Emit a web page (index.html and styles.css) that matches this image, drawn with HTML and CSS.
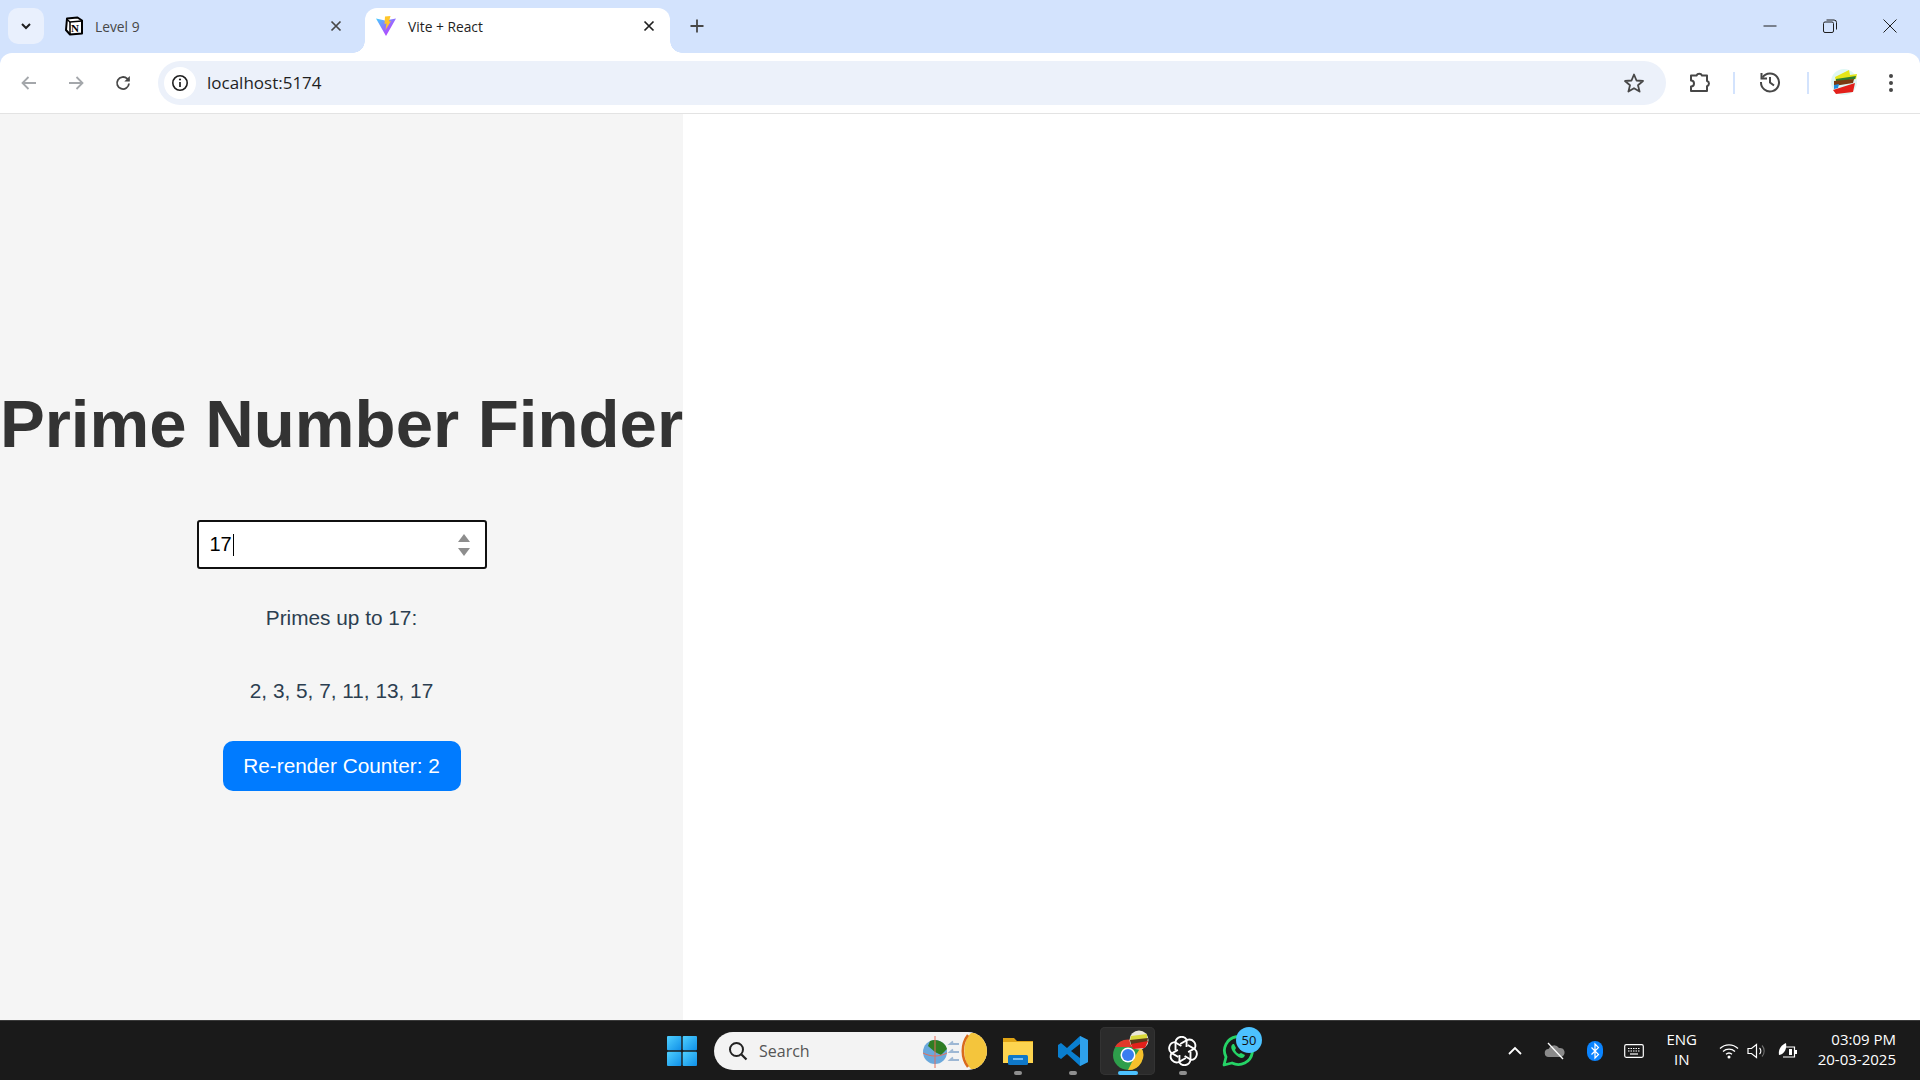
FILE: index.html
```html
<!DOCTYPE html>
<html lang="en">
<head>
    <meta charset="UTF-8">
    <title>Vite + React</title>
    <link rel="stylesheet" href="styles.css">
</head>
<body>
    <header class="tabstrip">
        <div class="tab-search">
            <svg width="14" height="14" viewBox="0 0 14 14"><path d="M3 5l4 4 4-4" fill="none" stroke="#1f1f1f" stroke-width="2"/></svg>
        </div>
        <div class="tab">
            <svg class="favicon" width="20" height="20" viewBox="0 0 20 20">
                <path d="M3 2.500L13.500 1.500 18 4.500V17.500L6 18.500 2 14z" fill="#fff" stroke="#000" stroke-width="2" stroke-linejoin="round"/>
                <path d="M2.500 3l3.500 3 12-1" fill="none" stroke="#000" stroke-width="1.500"/>
                <path d="M6 6v12" stroke="#000" stroke-width="1.500"/>
                <text x="7" y="16" class="notion-n">N</text>
            </svg>
            <span class="tab-title">Level 9</span>
            <svg class="tab-close" width="12" height="12" viewBox="0 0 12 12"><path d="M1.500 1.500l9 9M10.500 1.500l-9 9" stroke="#474747" stroke-width="1.700"/></svg>
        </div>
        <div class="tab tab-active">
            <svg class="favicon" width="22" height="22" viewBox="0 0 22 22">
                <path d="M1 3.500L10 5.500 21 3.500 11 21z" fill="url(#viteBody)"/>
                <path d="M10 1.500L15.500 1 14 6.500 16 6 10.500 15 11.500 8.500 9.500 9z" fill="#ffc62a"/>
                <defs>
                    <linearGradient id="viteBody" x1="0" y1="0" x2="1" y2="1">
                        <stop offset="0" stop-color="#41d1ff"/>
                        <stop offset="0.6" stop-color="#a35cff"/>
                        <stop offset="1" stop-color="#bd34fe"/>
                    </linearGradient>
                </defs>
            </svg>
            <span class="tab-title">Vite + React</span>
            <svg class="tab-close" width="12" height="12" viewBox="0 0 12 12"><path d="M1.500 1.500l9 9M10.500 1.500l-9 9" stroke="#1f1f1f" stroke-width="1.700"/></svg>
        </div>
        <svg class="new-tab" width="16" height="16" viewBox="0 0 16 16"><path d="M8 1.500v13M1.500 8h13" stroke="#474747" stroke-width="1.800"/></svg>
        <div class="window-controls">
            <svg width="14" height="14" viewBox="0 0 14 14"><path d="M0.500 7h13" stroke="#1f1f1f" stroke-width="1"/></svg>
            <svg width="14" height="14" viewBox="0 0 14 14"><rect x="0.500" y="3" width="10" height="10.500" rx="1.500" fill="none" stroke="#1f1f1f"/><path d="M3.500 1h7.500a2.500 2.500 0 0 1 2.500 2.500v7" fill="none" stroke="#1f1f1f"/></svg>
            <svg width="14" height="14" viewBox="0 0 14 14"><path d="M0.500 0.500l13 13M13.500 0.500l-13 13" stroke="#1f1f1f" stroke-width="1"/></svg>
        </div>
    </header>

    <nav class="toolbar">
        <svg class="nav-icon" width="20" height="20" viewBox="0 0 20 20"><path d="M17 10H4M9.500 4L3.500 10l6 6" fill="none" stroke="#a4a7ab" stroke-width="1.800"/></svg>
        <svg class="nav-icon" width="20" height="20" viewBox="0 0 20 20"><path d="M3 10h13M10.500 4l6 6-6 6" fill="none" stroke="#a4a7ab" stroke-width="1.800"/></svg>
        <svg class="nav-icon" width="20" height="20" viewBox="0 0 20 20"><path d="M16 10.500a6 6 0 1 1-1.800-4.800L16 7.500" fill="none" stroke="#474747" stroke-width="1.800"/><path d="M16.800 3v5.500h-5.500z" fill="#474747"/></svg>
        <div class="omnibox">
            <div class="site-info">
                <svg width="18" height="18" viewBox="0 0 18 18"><circle cx="9" cy="9" r="7.200" fill="none" stroke="#1f1f1f" stroke-width="1.600"/><path d="M9 8v5" stroke="#1f1f1f" stroke-width="1.700"/><circle cx="9" cy="5.500" r="1.100" fill="#1f1f1f"/></svg>
            </div>
            <span class="url">localhost:5174</span>
            <svg class="star" width="22" height="22" viewBox="0 0 22 22"><path d="M11 2.500l2.500 6 6.500.5-5 4.300 1.600 6.300L11 16.200l-5.600 3.400L7 13.300 2 9l6.500-.5z" fill="none" stroke="#474747" stroke-width="1.800" stroke-linejoin="round"/></svg>
        </div>
        <svg class="tool-extensions" width="24" height="24" viewBox="0 0 24 24"><path d="M3 5.500h5.500a3 3 0 0 1 5.500 0h5v5.500a2.700 2.700 0 0 1 0 5.200v4.800H3v-4.500a3 3 0 0 0 0-6z" fill="none" stroke="#474747" stroke-width="2" stroke-linejoin="round"/></svg>
        <span class="tool-divider"></span>
        <svg class="tool-history" width="24" height="24" viewBox="0 0 24 24"><path d="M4.500 7.500A9 9 0 1 1 3 12" fill="none" stroke="#474747" stroke-width="2"/><path d="M3.500 3v5.500H9" fill="none" stroke="#474747" stroke-width="2"/><path d="M12 7v5.500l4 3" fill="none" stroke="#474747" stroke-width="2"/></svg>
        <span class="tool-divider tool-divider-wide"></span>
        <svg class="avatar" width="28" height="28" viewBox="0 0 28 28">
            <circle cx="14" cy="14" r="13" fill="#dff7f5"/>
            <path d="M5 9l14-7 1 5 7-1-1 5-20 3z" fill="#e6e619"/>
            <path d="M6 11l20-3-1 3-19 3z" fill="#2e7d32"/>
            <path d="M4 13l20-2-1 4-19 3z" fill="#7a3b12"/>
            <path d="M4 17l5-1-1 4-4 1z" fill="#1f8fe0"/>
            <path d="M3 22l22-7-2 9-17 2z" fill="#e3201b"/>
        </svg>
        <svg class="tool-menu" width="6" height="20" viewBox="0 0 6 20"><circle cx="3" cy="3" r="2" fill="#474747"/><circle cx="3" cy="10" r="2" fill="#474747"/><circle cx="3" cy="17" r="2" fill="#474747"/></svg>
    </nav>

    <main class="page">
        <section class="finder">
            <h1>Prime Number Finder</h1>
            <div class="number-field">
                <span class="number-value">17</span>
                <span class="caret"></span>
                <svg class="spinner" width="14" height="24" viewBox="0 0 14 24"><path d="M7 1l6 8H1zM7 23l6-8H1z" fill="#8d8d8d"/></svg>
            </div>
            <p class="primes-label">Primes up to 17:</p>
            <p class="primes-list">2, 3, 5, 7, 11, 13, 17</p>
            <button class="counter" type="button">Re-render Counter: 2</button>
        </section>
    </main>

    <footer class="taskbar">
        <div class="task-center">
            <svg class="start" width="30" height="30" viewBox="0 0 30 30">
                <defs><linearGradient id="win" x1="0" y1="0" x2="1" y2="1"><stop offset="0" stop-color="#4fd0ff"/><stop offset="1" stop-color="#0f8fe8"/></linearGradient></defs>
                <rect width="14.300" height="14.300" rx="1" fill="url(#win)"/><rect x="15.700" width="14.300" height="14.300" rx="1" fill="url(#win)"/>
                <rect y="15.700" width="14.300" height="14.300" rx="1" fill="url(#win)"/><rect x="15.700" y="15.700" width="14.300" height="14.300" rx="1" fill="url(#win)"/>
            </svg>
            <div class="search-pill">
                <svg width="20" height="20" viewBox="0 0 20 20"><circle cx="8.500" cy="8.500" r="6.500" fill="none" stroke="#222" stroke-width="2"/><path d="M13.500 13.500l5 5" stroke="#222" stroke-width="2.200"/></svg>
                <span class="search-text">Search</span>
                <svg class="search-art" width="66" height="38" viewBox="0 0 66 38">
                    <circle cx="14" cy="20" r="12" fill="#6aa8dc"/>
                    <path d="M9 9c7-3 15 1 17 8l-6 6-6-3-7-6z" fill="#2f7d22"/>
                    <path d="M2 21c8 4 16 4 24 0" fill="none" stroke="#e46f5c" stroke-width="1"/>
                    <path d="M14 4v32" stroke="#e46f5c" stroke-width="1"/>
                    <path d="M38 12h-9l3-2.500M38 20h-9l3-2.500M38 28h-9l3-2.500" fill="none" stroke="#9db7d4" stroke-width="1.800"/>
                    <path d="M66 1H50c-9 8-9 28 0 36h16z" fill="#f4c53c"/>
                    <path d="M47 3c-7 9-7 23 0 32" fill="none" stroke="#d96a1c" stroke-width="2.500"/>
                </svg>
            </div>
            <div class="task-app">
                <svg width="32" height="32" viewBox="0 0 32 32"><path d="M1 3h11l3 3h16v22H1z" fill="#e0a415"/><rect x="1" y="7" width="30" height="21" fill="#fdd44f"/><rect x="6" y="20" width="20" height="10" rx="1.500" fill="#0f78c8"/><path d="M11 24h10" stroke="#9dd6ff" stroke-width="1.500"/></svg>
                <span class="run-dot"></span>
            </div>
            <div class="task-app">
                <svg width="32" height="32" viewBox="0 0 32 32"><path d="M23 1l8 4v22l-8 4-13-12-6 5-3-2V10l3-2 6 5z" fill="#0a7fd0"/><path d="M23 1l8 4v22l-8 4z" fill="#2ea0ea"/><path d="M23 9v14l-9-7z" fill="#1a1a1a"/></svg>
                <span class="run-dot"></span>
            </div>
            <div class="task-app task-app-active">
                <svg width="44" height="44" viewBox="0 0 44 44">
                    <circle cx="22" cy="26" r="15" fill="#2e9e4b"/>
                    <path d="M9 18a15 15 0 0 1 26 0H22z" fill="#e0392b"/>
                    <path d="M35 18a15 15 0 0 1-13 23l6.500-13z" fill="#f6c02b"/>
                    <circle cx="22" cy="26" r="7.500" fill="#fff"/><circle cx="22" cy="26" r="6" fill="#3a7df0"/>
                    <circle cx="33" cy="11" r="9.500" fill="#e9e6d8"/>
                    <path d="M25 7l16-2v5l-17 2z" fill="#d8d83a"/>
                    <path d="M24 11l18-2-1 5-16 2z" fill="#5a3a1a"/>
                    <path d="M25 15l17-3-3 7-12 1z" fill="#e3201b"/>
                </svg>
                <span class="run-bar"></span>
            </div>
            <div class="task-app">
                <svg width="30" height="30" viewBox="0 0 32 32" fill="none" stroke="#fff" stroke-width="2">
                    <path d="M13 8.500l7.500-4.300a6.500 6.500 0 0 1 8 9l-7 4"/>
                    <path d="M13 8.500l7.500-4.300a6.500 6.500 0 0 1 8 9l-7 4" transform="rotate(60 16 16)"/>
                    <path d="M13 8.500l7.500-4.300a6.500 6.500 0 0 1 8 9l-7 4" transform="rotate(120 16 16)"/>
                    <path d="M13 8.500l7.500-4.300a6.500 6.500 0 0 1 8 9l-7 4" transform="rotate(180 16 16)"/>
                    <path d="M13 8.500l7.500-4.300a6.500 6.500 0 0 1 8 9l-7 4" transform="rotate(240 16 16)"/>
                    <path d="M13 8.500l7.500-4.300a6.500 6.500 0 0 1 8 9l-7 4" transform="rotate(300 16 16)"/>
                </svg>
                <span class="run-dot"></span>
            </div>
            <div class="task-app">
                <svg width="32" height="32" viewBox="0 0 32 32"><path d="M2 30l2-8A14 14 0 1 1 10 28z" fill="none" stroke="#25d366" stroke-width="2.800" stroke-linejoin="round"/><path d="M11 9c-3 2-2 6 2 10s7 5 9 3l1-2-4-2-2 1c-2-1-3-2-4-4l1-2-2-4z" fill="#25d366"/></svg>
                <span class="badge">50</span>
            </div>
        </div>
        <div class="tray">
            <svg class="tray-chevron" width="16" height="16" viewBox="0 0 16 16"><path d="M2 11l6-6 6 6" fill="none" stroke="#fff" stroke-width="1.800"/></svg>
            <svg class="tray-cloud" width="22" height="18" viewBox="0 0 22 18"><path d="M5 15a4 4 0 0 1-.5-8A6 6 0 0 1 15 6a4.500 4.500 0 0 1 2 9z" fill="#8a8a8a"/><path d="M4 1l15 16" stroke="#fff" stroke-width="1.300"/></svg>
            <svg class="tray-bt" width="16" height="20" viewBox="0 0 16 20"><rect width="16" height="20" rx="8" fill="#0a84ff"/><path d="M4.500 6.500l7 7L8 17V3l3.500 3.500-7 7" fill="none" stroke="#fff" stroke-width="1.200"/></svg>
            <svg class="tray-keys" width="20" height="16" viewBox="0 0 20 16"><rect x="0.700" y="1.700" width="18.600" height="12.600" rx="1.500" fill="none" stroke="#fff" stroke-width="1.200"/><path d="M4 5.500h12M4 8h12" stroke="#fff" stroke-width="1.200" stroke-dasharray="1.500 1"/><path d="M6 11h8" stroke="#fff" stroke-width="1.200"/></svg>
            <div class="tray-lang"><span>ENG</span><span>IN</span></div>
            <svg class="tray-wifi" width="20" height="16" viewBox="0 0 20 16"><path d="M1 5.500a13 13 0 0 1 18 0M4 8.500a9 9 0 0 1 12 0M7 11.300a4.500 4.500 0 0 1 6 0" fill="none" stroke="#fff" stroke-width="1.300"/><circle cx="10" cy="14" r="1.500" fill="#fff"/></svg>
            <svg class="tray-sound" width="20" height="18" viewBox="0 0 20 18"><path d="M1 6.500h3.500L9.500 2.500v13l-5-4H1z" fill="none" stroke="#fff" stroke-width="1.200"/><path d="M12.500 6a4 4 0 0 1 0 6" fill="none" stroke="#fff" stroke-width="1.100"/><path d="M15 3.500a8 8 0 0 1 0 11" fill="none" stroke="#6d6d6d" stroke-width="1.100"/></svg>
            <svg class="tray-battery" width="20" height="18" viewBox="0 0 20 18"><path d="M7 5h9.500v10H5" fill="none" stroke="#fff" stroke-width="1.200"/><path d="M17 8h2v4h-2z" fill="#fff"/><path d="M1 13C0 6 4 3 8 1c1 5-1 11-7 12z" fill="#fff"/><path d="M11 7h3v6h-3z" fill="#fff"/></svg>
            <div class="tray-clock"><span>03:09 PM</span><span>20-03-2025</span></div>
        </div>
    </footer>
</body>
</html>
```

FILE: styles.css
```css
* {
    box-sizing: border-box;
}

html, body {
    height: 100%;
}

body {
    margin: 0;
    height: 1080px;
    overflow: hidden;
    display: flex;
    flex-direction: column;
    font-family: "Liberation Sans", Arial, sans-serif;
    background: #d3e3fd;
}

svg {
    display: block;
    flex-shrink: 0;
}

.notion-n {
    font: 700 11px "Liberation Serif", serif;
    fill: #000;
}

/* tab strip */
.tabstrip {
    height: 53px;
    background: #d3e3fd;
    display: flex;
    align-items: flex-start;
    padding: 8px 0 0 8px;
    font-family: "Open Sans", sans-serif;
}

.tab-search {
    width: 36px;
    height: 36px;
    background: #e9f0fd;
    border-radius: 10px;
    display: flex;
    align-items: center;
    justify-content: center;
}

.tab {
    width: 305px;
    height: 45px;
    margin-left: 8px;
    padding: 0 15px 9px 12px;
    border-radius: 12px 12px 0 0;
    display: flex;
    align-items: center;
    gap: 11px;
    font-size: 13.800px;
    color: #474747;
}

.tab-active {
    position: relative;
    background: #fff;
    color: #1f1f1f;
    padding-left: 10px;
}

/* the little curves where the active tab meets the toolbar */
.tab-active::before,
.tab-active::after {
    content: "";
    position: absolute;
    bottom: 0;
    width: 12px;
    height: 12px;
}

.tab-active::before {
    left: -12px;
    background: radial-gradient(circle at 0 0, transparent 11.500px, #fff 12px);
}

.tab-active::after {
    right: -12px;
    background: radial-gradient(circle at 100% 0, transparent 11.500px, #fff 12px);
}

.tab-title {
    flex: 1;
}

.new-tab {
    margin: 10px 0 0 19px;
}

.window-controls {
    margin-left: auto;
    display: flex;
    gap: 46px;
    padding: 11px 23px 0 0;
}

/* toolbar */
.toolbar {
    height: 61px;
    background: #fff;
    border-bottom: 1px solid #e3e3e3;
    border-radius: 12px 12px 0 0;
    display: flex;
    align-items: center;
    padding: 0 0 1px 19px;
}

.nav-icon {
    margin-right: 27px;
}

.omnibox {
    width: 1508px;
    height: 44px;
    margin-left: -2px;
    background: #ecf1fa;
    border-radius: 22px;
    display: flex;
    align-items: center;
    padding: 0 21px 0 6px;
}

.site-info {
    width: 32px;
    height: 32px;
    background: #fff;
    border-radius: 50%;
    display: flex;
    align-items: center;
    justify-content: center;
}

.url {
    margin-left: 11px;
    font-family: "Open Sans", sans-serif;
    font-size: 17px;
    color: #1f1f1f;
}

.star {
    margin-left: auto;
}

.tool-extensions {
    margin: 0 0 2px 22px;
}

.tool-history {
    margin-bottom: 2px;
}

.tool-divider {
    width: 2px;
    height: 22px;
    background: #d3e3fd;
    margin: 0 23px 0 21px;
}

.tool-divider-wide {
    margin: 0 21px 0 25px;
}

.avatar {
    margin-bottom: 2px;
}

.tool-menu {
    margin-left: 30px;
}

/* page */
.page {
    flex: 1;
    display: flex;
    min-height: 0;
    background: #fff;
}

.finder {
    width: 683px;
    padding-top: 42px;
    background: #f5f5f5;
    display: flex;
    flex-direction: column;
    align-items: center;
    justify-content: center;
    color: #2c3e50;
    font-size: 20.800px;
}

h1 {
    margin: 0 0 58px;
    font-size: 67.200px;
    line-height: 77px;
    font-weight: 700;
    color: #333;
    white-space: nowrap;
}

.number-field {
    width: 290px;
    height: 49px;
    background: #fff;
    border: 2px solid #101010;
    border-radius: 3px;
    display: flex;
    align-items: center;
    padding: 0 14px 0 11px;
    color: #000;
    font-size: 20px;
}

.caret {
    width: 1px;
    height: 22px;
    margin-left: 1px;
    background: #000;
}

.spinner {
    margin-left: auto;
}

.primes-label,
.primes-list {
    margin: 0;
    line-height: 24px;
}

.primes-label {
    margin-top: 37px;
}

.primes-list {
    margin-top: 49px;
}

.counter {
    width: 238px;
    height: 50px;
    margin-top: 38px;
    border: 0;
    border-radius: 10px;
    background: #007bff;
    color: #fff;
    font: 20.800px "Liberation Sans", Arial, sans-serif;
}

/* taskbar */
.taskbar {
    height: 60px;
    background: #1a1a1a;
    border-top: 1px solid #3a3a3a;
    display: flex;
    align-items: center;
    font-family: "Open Sans", sans-serif;
    color: #fff;
}

.task-center {
    display: flex;
    align-items: center;
    margin-left: 667px;
}

.start {
    margin-right: 17px;
}

.search-pill {
    width: 273px;
    height: 38px;
    border-radius: 19px;
    background: #f3f3f3;
    display: flex;
    align-items: center;
    padding: 0 0 0 14px;
    color: #555;
    font-size: 16px;
    overflow: hidden;
    margin-right: 3px;
}

.search-text {
    margin-left: 11px;
}

.search-art {
    margin-left: auto;
}

.task-app {
    position: relative;
    width: 55px;
    height: 48px;
    display: flex;
    align-items: center;
    justify-content: center;
    border-radius: 5px;
}

.task-app-active {
    background: #2b2b2b;
    box-shadow: inset 0 0 0 1px #333;
}

.run-dot {
    position: absolute;
    left: 24px;
    bottom: 0;
    width: 8px;
    height: 4px;
    border-radius: 2px;
    background: #8f8f8f;
}

.run-bar {
    position: absolute;
    left: 18px;
    bottom: 0;
    width: 20px;
    height: 4px;
    border-radius: 2px;
    background: #4cc2ff;
}

.badge {
    position: absolute;
    top: 0;
    right: 3px;
    width: 26px;
    height: 26px;
    border-radius: 50%;
    background: #4cc2ff;
    color: #111;
    font-size: 13px;
    line-height: 26px;
    text-align: center;
}

.tray {
    margin-left: auto;
    display: flex;
    align-items: center;
    padding-right: 24px;
}

.tray-cloud {
    margin-left: 21px;
}

.tray-bt {
    margin-left: 21px;
}

.tray-keys {
    margin-left: 21px;
}

.tray-lang {
    width: 36px;
    margin: 0 0 3px 20px;
    display: flex;
    flex-direction: column;
    align-items: center;
    font-size: 15px;
    line-height: 20px;
}

.tray-wifi {
    margin-left: 19px;
}

.tray-sound {
    margin-left: 8px;
}

.tray-battery {
    margin-left: 11px;
}

.tray-clock {
    margin: 0 0 4px 20px;
    display: flex;
    flex-direction: column;
    align-items: flex-end;
    font-size: 15px;
    line-height: 20px;
}
```
